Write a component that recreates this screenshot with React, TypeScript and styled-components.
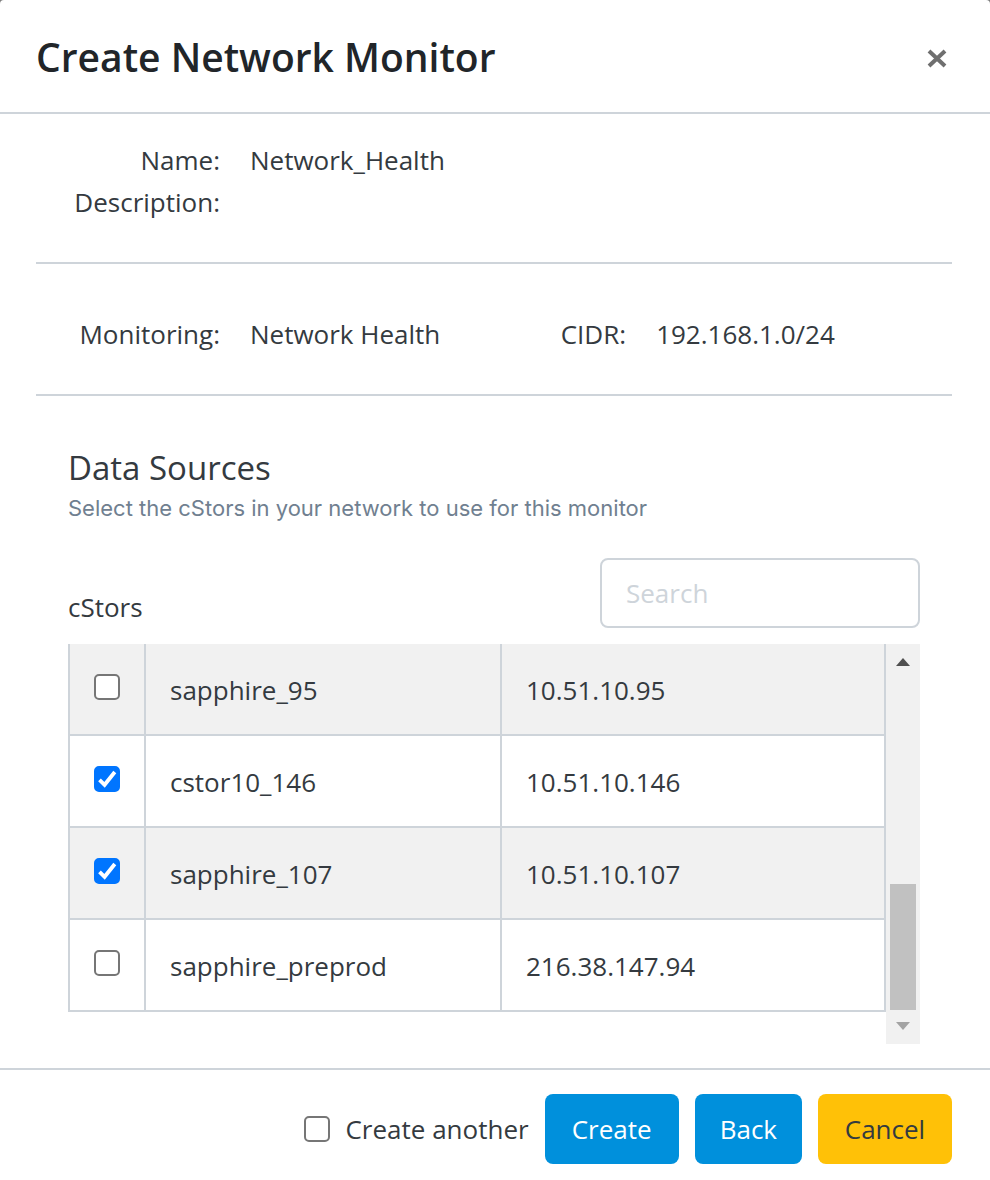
import React, { useState } from "react";
import styled, { createGlobalStyle } from "styled-components";

const line = "#ced4da";
const ink = "#343a40";

const GlobalStyle = createGlobalStyle`
  *, *::before, *::after { box-sizing: border-box; }
  body {
    margin: 0;
    background: #7d7d7d;
    color: ${ink};
    font-family: "Open Sans", "Noto Sans", sans-serif;
    font-size: 26px;
    line-height: 42px;
  }
`;

const Dialog = styled.main`
  display: flex;
  flex-direction: column;
  min-height: 100vh;
  background: #fff;
  border-radius: 4px 4px 0 0;
`;

const Header = styled.header`
  display: flex;
  align-items: center;
  justify-content: space-between;
  padding: 27px 38px 25px 36px;
  border-bottom: 2px solid ${line};
`;

const Title = styled.h1`
  margin: 0;
  font-size: 39px;
  font-weight: 600;
  line-height: 60px;
  color: #212529;
`;

const CloseButton = styled.button`
  display: flex;
  padding: 4px;
  border: 0;
  background: none;
  color: #6f6f6f;
  cursor: pointer;
`;

const Body = styled.div`
  flex: 1;
  padding: 0 38px 24px 36px;
`;

const Details = styled.dl<{ $top: number }>`
  display: grid;
  grid-template-columns: 184px 14fr 70px 15fr;
  column-gap: 30px;
  margin: 0;
  padding: ${(p) => p.$top}px 0 39px;
  border-bottom: 2px solid ${line};
`;

const Term = styled.dt`
  text-align: right;
  white-space: nowrap;
`;

const Value = styled.dd<{ $wide?: boolean }>`
  grid-column: ${(p) => (p.$wide ? "span 3" : "auto")};
  margin: 0;
`;

const Sources = styled.section`
  padding: 48px 32px 0;
`;

const SourcesTitle = styled.h2`
  margin: 0;
  font-size: 33px;
  font-weight: 400;
  line-height: 48px;
`;

const Hint = styled.p`
  margin: 0;
  font-family: Inter, sans-serif;
  font-size: 22px;
  font-optical-sizing: none;
  line-height: 32px;
  color: #708090;
`;

const Toolbar = styled.div`
  display: flex;
  align-items: flex-end;
  justify-content: space-between;
  margin: 34px 0 16px;
`;

const SearchInput = styled.input`
  width: 320px;
  height: 70px;
  padding: 0 24px;
  border: 2px solid ${line};
  border-radius: 8px;
  background: #fff;
  color: ${ink};
  font: inherit;
  &::placeholder { color: ${line}; opacity: 1; }
`;

const ListFrame = styled.div`
  display: flex;
  height: 400px;
`;

const Table = styled.table`
  flex: 1;
  align-self: flex-start;
  border-collapse: separate;
  border-spacing: 0;
  border-left: 2px solid ${line};
  table-layout: fixed;
  width: 100%;
`;

const Row = styled.tr`
  &:nth-child(odd) { background: #f1f1f1; }
`;

const Cell = styled.td<{ $tick?: boolean }>`
  width: ${(p) => (p.$tick ? "76px" : "auto")};
  height: 92px;
  padding: ${(p) => (p.$tick ? "0 0 4px" : "2px 24px 0")};
  border-right: 2px solid ${line};
  border-bottom: 2px solid ${line};
  &:nth-child(2) { width: 356px; }
`;

const Tick = styled.input`
  appearance: none;
  display: block;
  flex: none;
  width: 26px;
  height: 26px;
  margin: 0 auto;
  border: 2px solid #767676;
  border-radius: 5px;
  background: #fff;
  &:checked {
    border-color: #0075ff;
    background: #0075ff
      url("data:image/svg+xml,%3Csvg xmlns='http://www.w3.org/2000/svg' viewBox='0 0 22 22'%3E%3Cpath d='M3.5 11.8 8.6 16.8 18.8 4' fill='none' stroke='%23fff' stroke-width='3.8'/%3E%3C/svg%3E")
      center / 22px 22px no-repeat;
  }
`;

const ScrollBar = styled.div`
  display: flex;
  flex-direction: column;
  align-items: center;
  justify-content: space-between;
  width: 34px;
  background: #f1f1f1;
`;

const ScrollEnd = styled.div`
  display: flex;
  flex-direction: column;
  align-items: center;
`;

const ScrollThumb = styled.div`
  width: 26px;
  height: 126px;
  background: #c1c1c1;
`;

const ScrollArrow = styled.svg`
  display: block;
  width: 34px;
  height: 34px;
`;

const Footer = styled.footer`
  display: flex;
  align-items: center;
  justify-content: flex-end;
  gap: 16px;
  padding: 24px 38px 16px;
  border-top: 2px solid ${line};
`;

const Another = styled.label`
  display: flex;
  align-items: center;
  gap: 15px;
`;

const Button = styled.button<{ $tone: "primary" | "warning"; $wide?: boolean }>`
  min-width: ${(p) => (p.$wide ? "134px" : "0")};
  height: 70px;
  padding: 0 25px;
  border: 0;
  border-radius: 8px;
  background: ${(p) => (p.$tone === "primary" ? "#0090dc" : "#ffc107")};
  color: ${(p) => (p.$tone === "primary" ? "#fff" : ink)};
  font: inherit;
  cursor: pointer;
`;

const stores = [
  { name: "sapphire_95", ip: "10.51.10.95", on: false },
  { name: "cstor10_146", ip: "10.51.10.146", on: true },
  { name: "sapphire_107", ip: "10.51.10.107", on: true },
  { name: "sapphire_preprod", ip: "216.38.147.94", on: false },
];

export default function App() {
  const [picked, setPicked] = useState(stores.map((s) => s.on));
  const toggle = (i: number) => setPicked(picked.map((v, k) => (k === i ? !v : v)));

  return (
    <>
      <GlobalStyle />
      <Dialog>
        <Header>
          <Title>Create Network Monitor</Title>
          <CloseButton type="button" aria-label="Close">
            <svg width="22" height="22" viewBox="0 0 22 22" fill="none" stroke="currentColor" strokeWidth="4">
              <path d="M3 5 19 20M19 5 3 20" />
            </svg>
          </CloseButton>
        </Header>

        <Body>
          <Details $top={25}>
            <Term>Name:</Term>
            <Value $wide>Network_Health</Value>
            <Term>Description:</Term>
            <Value $wide />
          </Details>
          <Details $top={49}>
            <Term>Monitoring:</Term>
            <Value>Network Health</Value>
            <Term>CIDR:</Term>
            <Value>192.168.1.0/24</Value>
          </Details>

          <Sources>
            <SourcesTitle>Data Sources</SourcesTitle>
            <Hint>Select the cStors in your network to use for this monitor</Hint>
            <Toolbar>
              <span id="cstors">cStors</span>
              <SearchInput type="search" placeholder="Search" aria-label="Search" />
            </Toolbar>
            <ListFrame>
              <Table aria-labelledby="cstors">
                <tbody>
                  {stores.map((s, i) => (
                    <Row key={s.name}>
                      <Cell $tick>
                        <Tick type="checkbox" aria-label={s.name} checked={picked[i]} onChange={() => toggle(i)} />
                      </Cell>
                      <Cell>{s.name}</Cell>
                      <Cell>{s.ip}</Cell>
                    </Row>
                  ))}
                </tbody>
              </Table>
              <ScrollBar aria-hidden="true">
                <ScrollArrow viewBox="0 0 34 34">
                  <path d="M10 22 17 14 24 22Z" fill="#505050" />
                </ScrollArrow>
                <ScrollEnd>
                  <ScrollThumb />
                  <ScrollArrow viewBox="0 0 34 34">
                    <path d="M10 12 17 20 24 12Z" fill="#a3a3a3" />
                  </ScrollArrow>
                </ScrollEnd>
              </ScrollBar>
            </ListFrame>
          </Sources>
        </Body>

        <Footer>
          <Another>
            <Tick type="checkbox" />
            Create another
          </Another>
          <Button type="button" $tone="primary" $wide>Create</Button>
          <Button type="button" $tone="primary">Back</Button>
          <Button type="button" $tone="warning" $wide>Cancel</Button>
        </Footer>
      </Dialog>
    </>
  );
}
